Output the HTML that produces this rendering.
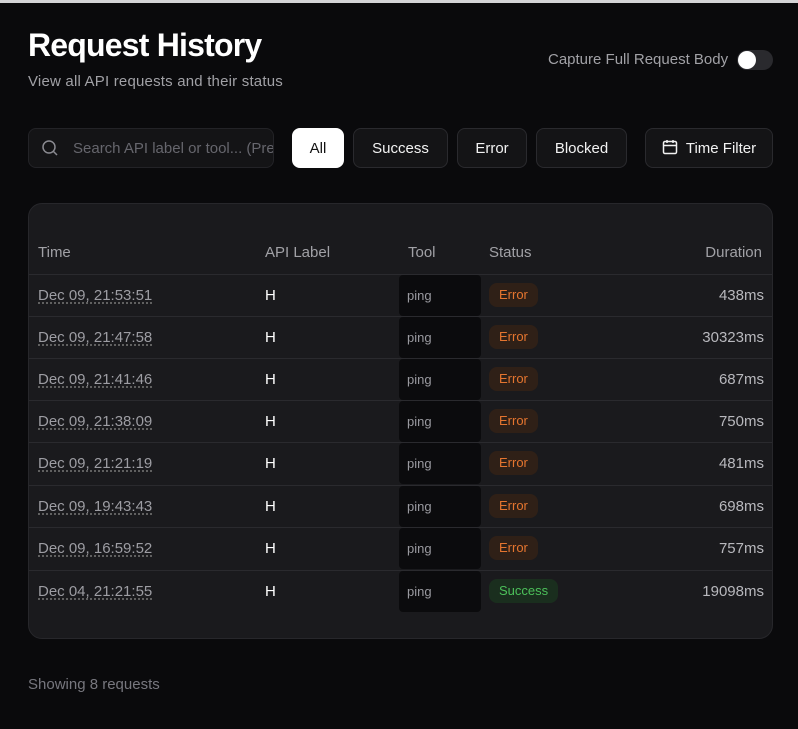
<!DOCTYPE html>
<html><head><style>
*{box-sizing:border-box;margin:0;padding:0}
body{width:798px;height:729px;background:#0a0a0c;font-family:"Liberation Sans",sans-serif;color:#fff;position:relative;overflow:hidden}
.top{position:absolute;left:0;top:0;width:798px;height:3px;background:#d4d4d6}
h1{position:absolute;left:28px;top:27px;font-size:32px;font-weight:bold;letter-spacing:-0.8px}
.sub{position:absolute;left:28px;top:73px;font-size:15px;color:#a1a1a6;letter-spacing:0.2px}
.cap{position:absolute;left:548px;top:51px;font-size:15px;color:#a1a1a6}
.tog{position:absolute;left:737px;top:50px;width:36px;height:20px;border-radius:10px;background:#2a2a2e}
.tog:after{content:"";position:absolute;left:1px;top:1px;width:18px;height:18px;border-radius:50%;background:#fff}
.search{position:absolute;left:28px;top:128px;width:246px;height:40px;border:1px solid #232327;border-radius:8px;background:#141416;font-size:15px;color:#66666d;padding:11px 0 0 44px;white-space:nowrap;overflow:hidden}
.search svg{position:absolute;left:12px;top:10px}
.btn{position:absolute;top:128px;height:40px;border:1px solid #2a2a2e;border-radius:8px;background:#141416;font-size:15px;color:#f2f2f2;text-align:center;line-height:40px}
.btn.on{background:#fff;color:#111;border-color:#fff}
.card{position:absolute;left:28px;top:203px;width:745px;height:436px;background:#1a1a1d;border:1px solid #27272b;border-radius:14px;overflow:hidden}
.th{position:absolute;top:40px;font-size:15px;color:#a1a1a6}
.row{position:absolute;left:0;width:745px;height:42px;border-top:1px solid #2a2a2e}
.row div{position:absolute;font-size:15px}
.t{left:9px;top:12px;color:#9d9da3;text-decoration:underline dotted #777;text-underline-offset:3px}
.a{left:236px;top:12px;color:#fff}
.tool{left:370px;top:0;width:82px;height:41px;background:#0b0b0d;border-radius:4px;color:#9a9aa0;font-size:13px!important;padding:13px 0 0 8px}
.b{left:460px;top:8px;height:24px;padding:0 10px;border-radius:8px;font-size:13px!important;line-height:24px}
.e{background:#2f2017;color:#e5752f}
.s{background:#1a2e1e;color:#4cc05a}
.d{right:10px;top:12px;color:#b8b8bd}
.foot{position:absolute;left:28px;top:676px;font-size:15px;color:#77777e}
</style></head><body>
<div class="top"></div>
<h1>Request History</h1>
<div class="sub">View all API requests and their status</div>
<div class="cap">Capture Full Request Body</div>
<div class="tog"></div>
<div class="search"><svg width="18" height="18" viewBox="0 0 18 18" fill="none" stroke="#8a8a90" stroke-width="1.5"><circle cx="8" cy="8" r="6"/><path d="M12.5 12.5L16 16"/></svg>Search API label or tool... (Press /)</div>
<div class="btn on" style="left:292px;width:52px">All</div>
<div class="btn" style="left:353px;width:95px">Success</div>
<div class="btn" style="left:457px;width:70px">Error</div>
<div class="btn" style="left:536px;width:91px">Blocked</div>
<div class="btn" style="left:645px;width:128px"><svg width="16" height="16" viewBox="0 0 16 16" fill="none" stroke="#f2f2f2" stroke-width="1.5" style="vertical-align:-2px;margin-right:8px"><rect x="1.5" y="2.5" width="13" height="12" rx="1.5"/><path d="M1.5 6.5h13M5 1v3M11 1v3"/></svg>Time Filter</div>
<div class="card">
<div class="th" style="left:9px">Time</div>
<div class="th" style="left:236px">API Label</div>
<div class="th" style="left:379px">Tool</div>
<div class="th" style="left:460px">Status</div>
<div class="th" style="right:10px">Duration</div>
<div class="row" style="top:70px"><div class="t">Dec 09, 21:53:51</div><div class="a">H</div><div class="tool">ping</div><div class="b e">Error</div><div class="d">438ms</div></div>
<div class="row" style="top:112px"><div class="t">Dec 09, 21:47:58</div><div class="a">H</div><div class="tool">ping</div><div class="b e">Error</div><div class="d">30323ms</div></div>
<div class="row" style="top:154px"><div class="t">Dec 09, 21:41:46</div><div class="a">H</div><div class="tool">ping</div><div class="b e">Error</div><div class="d">687ms</div></div>
<div class="row" style="top:196px"><div class="t">Dec 09, 21:38:09</div><div class="a">H</div><div class="tool">ping</div><div class="b e">Error</div><div class="d">750ms</div></div>
<div class="row" style="top:238px"><div class="t">Dec 09, 21:21:19</div><div class="a">H</div><div class="tool">ping</div><div class="b e">Error</div><div class="d">481ms</div></div>
<div class="row" style="top:281px"><div class="t">Dec 09, 19:43:43</div><div class="a">H</div><div class="tool">ping</div><div class="b e">Error</div><div class="d">698ms</div></div>
<div class="row" style="top:323px"><div class="t">Dec 09, 16:59:52</div><div class="a">H</div><div class="tool">ping</div><div class="b e">Error</div><div class="d">757ms</div></div>
<div class="row" style="top:366px"><div class="t">Dec 04, 21:21:55</div><div class="a">H</div><div class="tool">ping</div><div class="b s">Success</div><div class="d">19098ms</div></div>
</div>
<div class="foot">Showing 8 requests</div>
</body></html>
